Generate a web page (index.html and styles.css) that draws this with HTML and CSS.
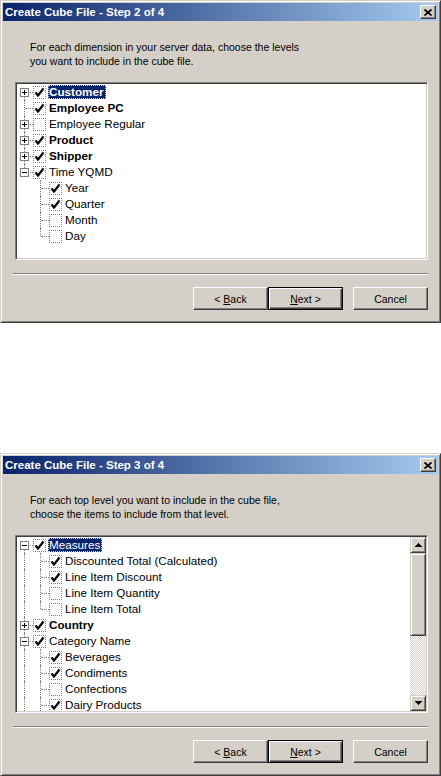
FILE: index.html
```html
<!DOCTYPE html>
<html lang="en">
<head>
    <meta charset="UTF-8">
    <title>Create Cube File</title>
    <link rel="stylesheet" href="styles.css">
</head>
<body>
    <!-- Step 2: pick the levels of each dimension -->
    <div class="window">
        <div class="titlebar">
            <span class="title">Create Cube File - Step 2 of 4</span>
            <span class="close"><svg width="8" height="7" viewBox="0 0 8 7"><path d="M0.5 0.5L7.5 6.5M7.5 0.5L0.5 6.5" stroke="#000" stroke-width="1.7" fill="none"/></svg></span>
        </div>
        <div class="content">
            <p class="intro">For each dimension in your server data, choose the levels<br>you want to include in the cube file.</p>
            <div class="tree">
                <div class="rows">
                    <div class="row"><span class="cell first"><span class="exp plus"></span></span><span class="chk on"></span><span class="label bold sel">Customer</span></div>
                    <div class="row"><span class="cell tee"></span><span class="chk on"></span><span class="label bold">Employee PC</span></div>
                    <div class="row"><span class="cell tee"><span class="exp plus"></span></span><span class="chk"></span><span class="label">Employee Regular</span></div>
                    <div class="row"><span class="cell tee"><span class="exp plus"></span></span><span class="chk on"></span><span class="label bold">Product</span></div>
                    <div class="row"><span class="cell tee"><span class="exp plus"></span></span><span class="chk on"></span><span class="label bold">Shipper</span></div>
                    <div class="row"><span class="cell corner"><span class="exp"></span></span><span class="chk on"></span><span class="label">Time YQMD</span></div>
                    <div class="row"><span class="cell"></span><span class="cell tee"></span><span class="chk on"></span><span class="label">Year</span></div>
                    <div class="row"><span class="cell"></span><span class="cell tee"></span><span class="chk on"></span><span class="label">Quarter</span></div>
                    <div class="row"><span class="cell"></span><span class="cell tee"></span><span class="chk"></span><span class="label">Month</span></div>
                    <div class="row"><span class="cell"></span><span class="cell corner"></span><span class="chk"></span><span class="label">Day</span></div>
                </div>
            </div>
            <div class="separator"></div>
            <div class="buttons">
                <button class="btn">&lt; <u>B</u>ack</button>
                <button class="btn default"><u>N</u>ext &gt;</button>
                <button class="btn cancel">Cancel</button>
            </div>
        </div>
    </div>

    <!-- Step 3: pick the items of each top level -->
    <div class="window">
        <div class="titlebar">
            <span class="title">Create Cube File - Step 3 of 4</span>
            <span class="close"><svg width="8" height="7" viewBox="0 0 8 7"><path d="M0.5 0.5L7.5 6.5M7.5 0.5L0.5 6.5" stroke="#000" stroke-width="1.7" fill="none"/></svg></span>
        </div>
        <div class="content">
            <p class="intro">For each top level you want to include in the cube file,<br>choose the items to include from that level.</p>
            <div class="tree">
                <div class="rows">
                    <div class="row"><span class="cell first"><span class="exp"></span></span><span class="chk on"></span><span class="label sel">Measures</span></div>
                    <div class="row"><span class="cell pipe"></span><span class="cell tee"></span><span class="chk on"></span><span class="label">Discounted Total (Calculated)</span></div>
                    <div class="row"><span class="cell pipe"></span><span class="cell tee"></span><span class="chk on"></span><span class="label">Line Item Discount</span></div>
                    <div class="row"><span class="cell pipe"></span><span class="cell tee"></span><span class="chk"></span><span class="label">Line Item Quantity</span></div>
                    <div class="row"><span class="cell pipe"></span><span class="cell corner"></span><span class="chk"></span><span class="label">Line Item Total</span></div>
                    <div class="row"><span class="cell tee"><span class="exp plus"></span></span><span class="chk on"></span><span class="label bold">Country</span></div>
                    <div class="row"><span class="cell tee"><span class="exp"></span></span><span class="chk on"></span><span class="label">Category Name</span></div>
                    <div class="row"><span class="cell pipe"></span><span class="cell tee"></span><span class="chk on"></span><span class="label">Beverages</span></div>
                    <div class="row"><span class="cell pipe"></span><span class="cell tee"></span><span class="chk on"></span><span class="label">Condiments</span></div>
                    <div class="row"><span class="cell pipe"></span><span class="cell tee"></span><span class="chk"></span><span class="label">Confections</span></div>
                    <div class="row"><span class="cell pipe"></span><span class="cell tee"></span><span class="chk on"></span><span class="label">Dairy Products</span></div>
                </div>
                <div class="vscroll">
                    <span class="sb-btn"><svg width="7" height="4" viewBox="0 0 7 4"><path d="M3 0h1v1h1v1h1v1h1v1H0V3h1V2h1V1h1z"/></svg></span>
                    <span class="thumb"></span>
                    <span class="track"></span>
                    <span class="sb-btn"><svg width="7" height="4" viewBox="0 0 7 4"><path d="M0 0h7v1H6v1H5v1H4v1H3V3H2V2H1V1H0z"/></svg></span>
                </div>
            </div>
            <div class="separator"></div>
            <div class="buttons">
                <button class="btn">&lt; <u>B</u>ack</button>
                <button class="btn default"><u>N</u>ext &gt;</button>
                <button class="btn cancel">Cancel</button>
            </div>
        </div>
    </div>
</body>
</html>
```

FILE: styles.css
```css
* {
    box-sizing: border-box;
}

body {
    margin: 0;
    width: 441px;
    background-color: #fff;
    font-family: 'Liberation Sans', Arial, sans-serif;
    font-size: 10.5px;
    color: #000;
}

/* classic raised window frame */
.window {
    width: 441px;
    height: 323px;
    padding: 2px;
    display: flex;
    flex-direction: column;
    background-color: #d4d0c8;
    border: 1px solid;
    border-color: #d4d0c8 #404040 #404040 #d4d0c8;
    box-shadow: inset 1px 1px #fff, inset -1px -1px #808080;
}

.window + .window {
    margin-top: 130px;
}

.titlebar {
    height: 18px;
    padding: 0 2px;
    display: flex;
    align-items: center;
    background: linear-gradient(to right, #0a246a, #a6caf0);
}

.title {
    color: #fff;
    font-weight: bold;
    font-size: 11.5px;
}

.close {
    margin-left: auto;
    width: 16px;
    height: 14px;
    display: flex;
    align-items: center;
    justify-content: center;
    background-color: #d4d0c8;
    border: 1px solid;
    border-color: #fff #404040 #404040 #fff;
    box-shadow: inset -1px -1px #808080;
}

.content {
    flex: 1;
    display: flex;
    flex-direction: column;
    padding: 0 10px 0 12px;
}

.intro {
    margin: 19px 0 0 15px;
    line-height: 14px;
}

/* sunken tree view */
.tree {
    margin-top: 14px;
    height: 178px;
    display: flex;
    overflow: hidden;
    background-color: #fff;
    border: 1px solid;
    border-color: #808080 #fff #fff #808080;
    box-shadow: inset 1px 1px #404040, inset -1px -1px #d4d0c8;
    padding: 1px;
    font-size: 11.7px;
}

.rows {
    flex: 1;
    overflow: hidden;
}

.row {
    height: 16px;
    display: flex;
    align-items: center;
}

.cell {
    position: relative;
    flex: none;
    width: 16px;
    height: 16px;
    display: flex;
}

.pipe::before,
.tee::before,
.corner::before,
.first::before {
    content: '';
    position: absolute;
    left: 7px;
    top: 0;
    bottom: 0;
    border-left: 1px dotted #808080;
}

.first::before {
    top: 8px;
}

.corner::before {
    bottom: 8px;
}

.tee::after,
.corner::after,
.first::after {
    content: '';
    position: absolute;
    left: 8px;
    top: 8px;
    width: 8px;
    border-top: 1px dotted #808080;
}

/* expand / collapse box */
.exp {
    position: relative;
    z-index: 1;
    width: 9px;
    height: 9px;
    margin: 4px 0 0 3px;
    border: 1px solid #808080;
    background: linear-gradient(#000, #000) center / 5px 1px no-repeat, #fff;
}

.exp.plus {
    background: linear-gradient(#000, #000) center / 5px 1px no-repeat,
                linear-gradient(#000, #000) center / 1px 5px no-repeat, #fff;
}

.chk {
    flex: none;
    width: 13px;
    height: 13px;
    border: 1px dotted #808080;
}

.chk.on {
    background: url("data:image/svg+xml,%3Csvg xmlns='http://www.w3.org/2000/svg' width='11' height='11'%3E%3Cpath d='M1.5 5.5L4 8.5L9.5 1.5' stroke='%23000' stroke-width='2.2' fill='none'/%3E%3C/svg%3E") no-repeat;
}

.label {
    margin-left: 2px;
    padding: 0 2px 0 1px;
    height: 14px;
    line-height: 14px;
    white-space: nowrap;
}

.label.bold {
    font-weight: bold;
}

.label.sel {
    background-color: #0a246a;
    color: #fff;
    outline: 1px dotted #d4d0c8;
    outline-offset: -1px;
}

/* vertical scroll bar */
.vscroll {
    flex: none;
    width: 16px;
    display: flex;
    flex-direction: column;
}

.sb-btn,
.thumb {
    flex: none;
    background-color: #d4d0c8;
    border: 1px solid;
    border-color: #d4d0c8 #404040 #404040 #d4d0c8;
    box-shadow: inset 1px 1px #fff, inset -1px -1px #808080;
}

.sb-btn {
    height: 16px;
    display: flex;
    align-items: center;
    justify-content: center;
}

.thumb {
    height: 83px;
}

.track {
    flex: 1;
    background: repeating-conic-gradient(#d4d0c8 0 25%, #fff 0 50%) 0 0 / 2px 2px;
}

.separator {
    margin: 13px 0 0 -2px;
    height: 2px;
    border-top: 1px solid #808080;
    border-bottom: 1px solid #fff;
}

.buttons {
    margin-top: 12px;
    display: flex;
    justify-content: flex-end;
}

.btn {
    width: 75px;
    height: 23px;
    padding: 0;
    font-family: inherit;
    font-size: 10.5px;
    color: #000;
    background-color: #d4d0c8;
    border: 1px solid;
    border-color: #fff #404040 #404040 #fff;
    box-shadow: inset -1px -1px #808080;
}

.btn.default {
    border-color: #000;
    box-shadow: inset 1px 1px #fff, inset -1px -1px #404040, inset -2px -2px #808080;
}

.btn.cancel {
    margin-left: 10px;
}
```
